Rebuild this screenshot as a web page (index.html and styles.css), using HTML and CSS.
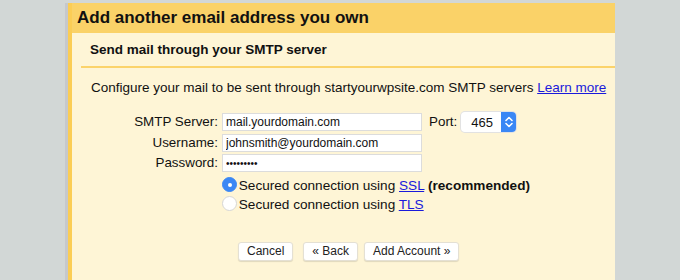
FILE: index.html
```html
<!DOCTYPE html>
<html>
<head>
<meta charset="utf-8">
<link rel="stylesheet" href="styles.css">
</head>
<body class="page">
  <div class="panel">
    <h1 class="panel-title">Add another email address you own</h1>
    <div class="panel-body">
      <h2 class="section-title">Send mail through your SMTP server</h2>
      <p class="intro">Configure your mail to be sent through startyourwpsite.com SMTP servers <a href="#">Learn more</a></p>

      <div class="smtp-form">
        <label class="lbl">SMTP Server:</label>
        <input class="field" type="text" value="mail.yourdomain.com">
        <label class="lbl port-lbl">Port:</label>
        <div class="port-select"><span class="port-val">465</span><span class="port-arrows">
          <svg width="10" height="14" viewBox="0 0 10 14"><path d="M2 5.5 L5 2.5 L8 5.5 M2 8.5 L5 11.5 L8 8.5" fill="none" stroke="#fff" stroke-width="1.6" stroke-linecap="round" stroke-linejoin="round"/></svg>
        </span></div>

        <label class="lbl">Username:</label>
        <input class="field" type="text" value="johnsmith@yourdomain.com">
        <span></span><span></span>

        <label class="lbl">Password:</label>
        <input class="field pwd" type="text" value="•••••••••">
        <span></span><span></span>
      </div>

      <div class="security">
        <div class="radio-row"><span class="radio checked"></span> Secured connection using <a href="#">SSL</a> <b>(recommended)</b></div>
        <div class="radio-row"><span class="radio"></span> Secured connection using <a href="#">TLS</a></div>
      </div>

      <div class="actions">
        <button class="btn btn-cancel">Cancel</button>
        <button class="btn btn-back">« Back</button>
        <button class="btn">Add Account »</button>
      </div>
    </div>
  </div>
</body>
</html>
```
FILE: styles.css
```css
/* gmail style "add address" dialog */
.page {
  margin: 0;
  background: #d2d7d6;
  font-family: "Liberation Sans", Arial, sans-serif;
  color: #111;
  height: 280px;
  overflow: hidden;
}

.panel {
  margin: 3px 0 0 65px;
  width: 550px;
  height: 277px;
  border-left: 3px solid #c6c8cc;
  box-sizing: border-box;
}

.panel-title {
  margin: 0;
  height: 30px;
  line-height: 30px;
  padding-left: 5px;
  font-size: 17px;
  font-weight: bold;
  background: #fad268;
  border-left: 4px solid #fbcd55;
  color: #111;
}

.panel-body {
  background: #fef5d6;
  border-left: 4px solid #fbcd55;
  height: 247px;
  padding-left: 9px;
}

.section-title {
  margin: 0;
  font-size: 13.5px;
  font-weight: bold;
  padding: 9px 0 0 9px;
  height: 24px;
  line-height: 16px;
  border-bottom: 2px solid #fbd36a;
}

.intro {
  margin: 0;
  padding: 11px 0 0 10px;
  font-size: 13.5px;
  line-height: 17px;
  white-space: nowrap;
}

a {
  color: #1a1adb;
}

.smtp-form {
  display: grid;
  grid-template-columns: 128px 200px auto auto;
  justify-content: start;
  column-gap: 4px;
  row-gap: 2px;
  align-items: center;
  margin-top: 16px;
  margin-left: 9px;
}

.lbl {
  text-align: right;
  font-size: 13.4px;
  line-height: 18px;
}

.port-lbl {
  margin-left: 3px;
  text-align: left;
}

.field {
  height: 18px;
  box-sizing: border-box;
  border: 1px solid #dcdcdc;
  background: #fff;
  font-family: "Liberation Sans", Arial, sans-serif;
  font-size: 12px;
  padding: 0 3px;
  margin: 0;
  color: #111;
}

.pwd {
  font-size: 10px;
}

.port-select {
  display: flex;
  align-items: center;
  width: 55px;
  height: 20px;
  background: #fff;
  border-radius: 4px;
  box-shadow: 0 0 0 1px #e2e2e2;
}

.port-val {
  flex: 1;
  font-size: 13px;
  padding-left: 10px;
}

.port-arrows {
  width: 15px;
  height: 20px;
  background: #3a87f5;
  border-radius: 0 4px 4px 0;
  display: flex;
  align-items: center;
  justify-content: center;
}

.security {
  margin: 4px 0 0 141px;
  font-size: 13.6px;
}

.radio-row {
  height: 19px;
  line-height: 19px;
  white-space: nowrap;
}

.radio {
  display: inline-block;
  vertical-align: -2px;
  width: 13px;
  height: 13px;
  border-radius: 50%;
  border: 1px solid #d6d6d6;
  background: #fff;
  margin-right: -2px;
  position: relative;
}

.radio.checked {
  background: #3a87f5;
  border-color: #3a87f5;
}

.radio.checked::after {
  content: "";
  position: absolute;
  left: 5px;
  top: 5px;
  width: 4px;
  height: 4px;
  border-radius: 50%;
  background: #fff;
}

.actions {
  margin: 28px 0 0 157px;
  display: flex;
}

.btn {
  height: 19px;
  padding: 0 8px;
  font-family: "Liberation Sans", Arial, sans-serif;
  font-size: 12px;
  color: #222;
  background: #fff;
  border: 1px solid #e4e0d4;
  border-radius: 3px;
  box-shadow: 0 1px 1px rgba(0, 0, 0, 0.12);
  line-height: 17px;
}

.btn-cancel {
  margin-right: 10px;
}

.btn-back {
  margin-right: 6px;
}
```
